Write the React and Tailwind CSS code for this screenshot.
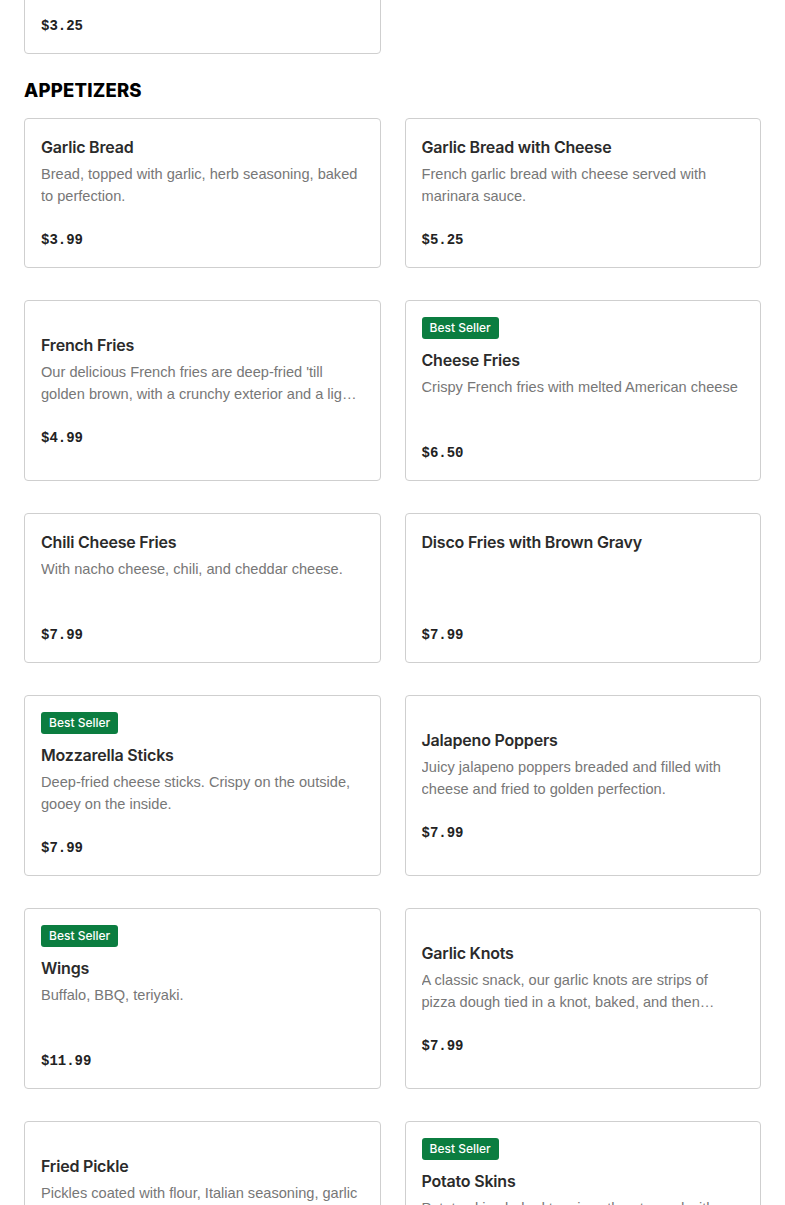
import React from "react";

const appetizers = [
  { name: "Garlic Bread", desc: "Bread, topped with garlic, herb seasoning, baked to perfection.", price: "$3.99" },
  { name: "Garlic Bread with Cheese", desc: "French garlic bread with cheese served with marinara sauce.", price: "$5.25" },
  { name: "French Fries", desc: "Our delicious French fries are deep-fried 'till golden brown, with a crunchy exterior and a light and fluffy interior.", price: "$4.99" },
  { name: "Cheese Fries", desc: "Crispy French fries with melted American cheese", price: "$6.50", best: true },
  { name: "Chili Cheese Fries", desc: "With nacho cheese, chili, and cheddar cheese.", price: "$7.99" },
  { name: "Disco Fries with Brown Gravy", desc: "", price: "$7.99" },
  { name: "Mozzarella Sticks", desc: "Deep-fried cheese sticks. Crispy on the outside, gooey on the inside.", price: "$7.99", best: true },
  { name: "Jalapeno Poppers", desc: "Juicy jalapeno poppers breaded and filled with cheese and fried to golden perfection.", price: "$7.99" },
  { name: "Wings", desc: "Buffalo, BBQ, teriyaki.", price: "$11.99", best: true },
  { name: "Garlic Knots", desc: "A classic snack, our garlic knots are strips of pizza dough tied in a knot, baked, and then brushed with garlic butter.", price: "$7.99" },
  { name: "Fried Pickle", desc: "Pickles coated with flour, Italian seasoning, garlic powder, and deep-fried.", price: "$7.99" },
  { name: "Potato Skins", desc: "Potato skins baked to crispy then topped with cheese and bacon bits.", price: "$7.99", best: true },
];

const sans = { fontFamily: "'Liberation Sans', Arial, sans-serif" };

function MenuCard({ item }) {
  return (
    <div className="flex flex-col justify-center rounded-[4px] border border-[#cfcfcf] bg-white p-4">
      {item.best && (
        <div className="mb-[9px] flex">
          <span className="flex h-[22px] items-center rounded-[3px] bg-[#0b7d40] px-2 text-[12px] font-medium text-white font-['Inter',sans-serif]">
            Best Seller
          </span>
        </div>
      )}
      <h3 className="h-6 text-[16px] leading-6 font-semibold text-[#2b2b2b] font-['Inter',sans-serif] tracking-[-0.2px]">
        {item.name}
      </h3>
      <p
        className="mt-1 h-11 line-clamp-2 text-[14.6px] leading-[22px] text-[#777]"
        style={sans}
      >
        {item.desc}
      </p>
      <div className="mt-[22px] text-[14px] leading-[22px] font-bold text-[#222] font-['Liberation_Mono',monospace]">
        {item.price}
      </div>
    </div>
  );
}

export default function App() {
  return (
    <div className="min-h-screen overflow-hidden bg-white px-6">
      <div className="-mt-[96px] grid grid-cols-2 gap-x-6 gap-y-8">
        <MenuCard item={{ name: "Soft Drink", desc: "Coke, Diet Coke, Sprite, Ginger Ale.", price: "$3.25" }} />
      </div>
      <h2 className="mt-[22px] mb-[14px] h-7 text-[18.5px] leading-7 font-extrabold text-black font-['Inter',sans-serif] tracking-[0.2px]">
        APPETIZERS
      </h2>
      <div className="grid grid-cols-2 gap-x-6 gap-y-8">
        {appetizers.map((item) => (
          <MenuCard key={item.name} item={item} />
        ))}
      </div>
    </div>
  );
}
